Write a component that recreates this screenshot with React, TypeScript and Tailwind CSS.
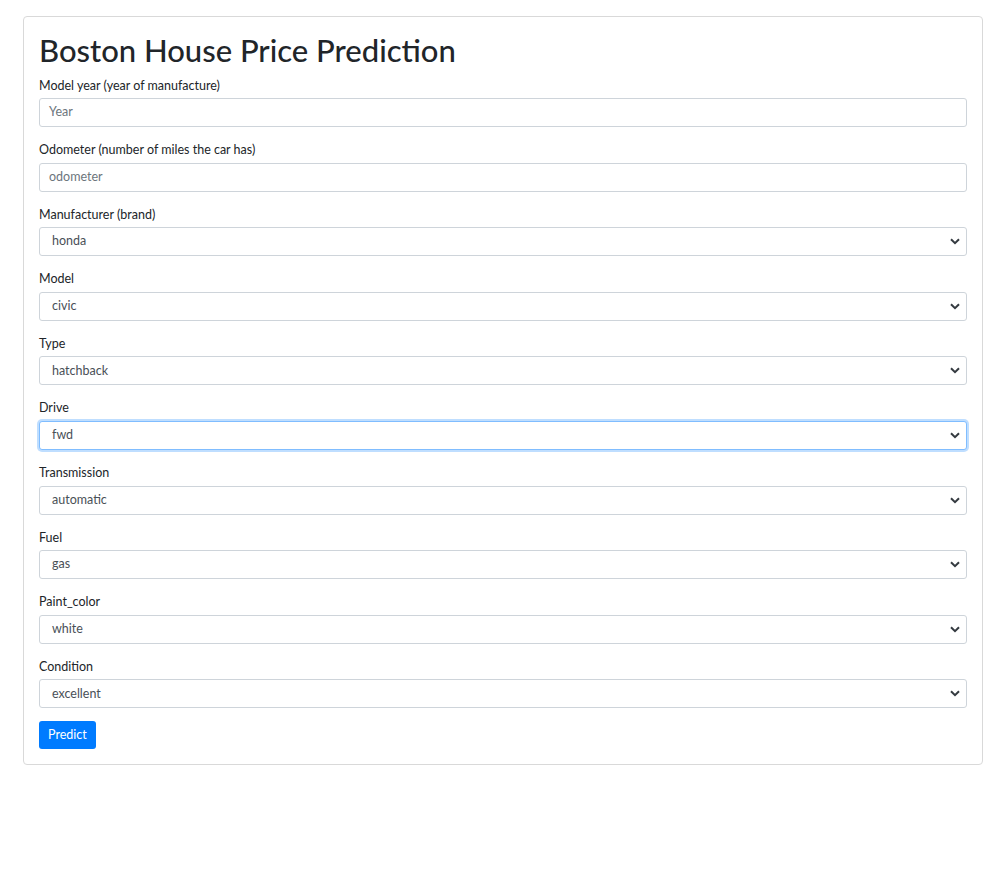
import React from 'react';

const fields: { label: string; value: string; focused?: boolean }[] = [
  { label: 'Manufacturer (brand)', value: 'honda' },
  { label: 'Model', value: 'civic' },
  { label: 'Type', value: 'hatchback' },
  { label: 'Drive', value: 'fwd', focused: true },
  { label: 'Transmission', value: 'automatic' },
  { label: 'Fuel', value: 'gas' },
  { label: 'Paint_color', value: 'white' },
  { label: 'Condition', value: 'excellent' },
];

const Chevron = () => (
  <svg width="10" height="7" viewBox="0 0 10 7" className="text-[#343a40]">
    <path d="M1 1.2 L5 5.2 L9 1.2" fill="none" stroke="currentColor" strokeWidth="2" />
  </svg>
);

const TextField = ({ label, placeholder }: { label: string; placeholder: string }) => (
  <div className="mb-[14px]">
    <div className="mb-[4px] text-[12.5px] leading-[17.6px] text-[#212529]">{label}</div>
    <div className="flex h-[29px] items-center rounded-[3px] border border-[#ced4da] bg-white px-[9px] text-[12.5px] text-[#6c757d]">
      {placeholder}
    </div>
  </div>
);

const SelectField = ({ label, value, focused }: { label: string; value: string; focused?: boolean }) => (
  <div className="mb-[14px]">
    <div className="mb-[4px] text-[12.5px] leading-[17.6px] text-[#212529]">{label}</div>
    <div
      className={
        focused
          ? 'flex h-[29px] items-center justify-between rounded-[3px] border border-[#80bdff] bg-white pl-[12px] pr-[6px] text-[12.5px] text-[#495057] shadow-[0_0_0_2px_rgba(0,123,255,0.25)]'
          : 'flex h-[29px] items-center justify-between rounded-[3px] border border-[#ced4da] bg-white pl-[12px] pr-[6px] text-[12.5px] text-[#495057]'
      }
    >
      <span>{value}</span>
      <Chevron />
    </div>
  </div>
);

export default function App() {
  return (
    <div className="min-h-[886px] bg-white px-[23px] pt-[16px] font-['Lato',sans-serif]">
      <div className="rounded-[4px] border border-[#d9d9d9] px-[15px] pt-[15px] pb-[15px]">
        <h1 className="mb-[7.5px] text-[31px] leading-[37px] font-medium text-[#212529]">
          Boston House Price Prediction
        </h1>
        <TextField label="Model year (year of manufacture)" placeholder="Year" />
        <TextField label="Odometer (number of miles the car has)" placeholder="odometer" />
        {fields.map((f) => (
          <SelectField key={f.label} label={f.label} value={f.value} focused={f.focused} />
        ))}
        <button className="mt-[-1px] flex h-[28px] items-center rounded-[3px] bg-[#007bff] px-[9px] text-[12.5px] text-white">
          Predict
        </button>
      </div>
    </div>
  );
}
